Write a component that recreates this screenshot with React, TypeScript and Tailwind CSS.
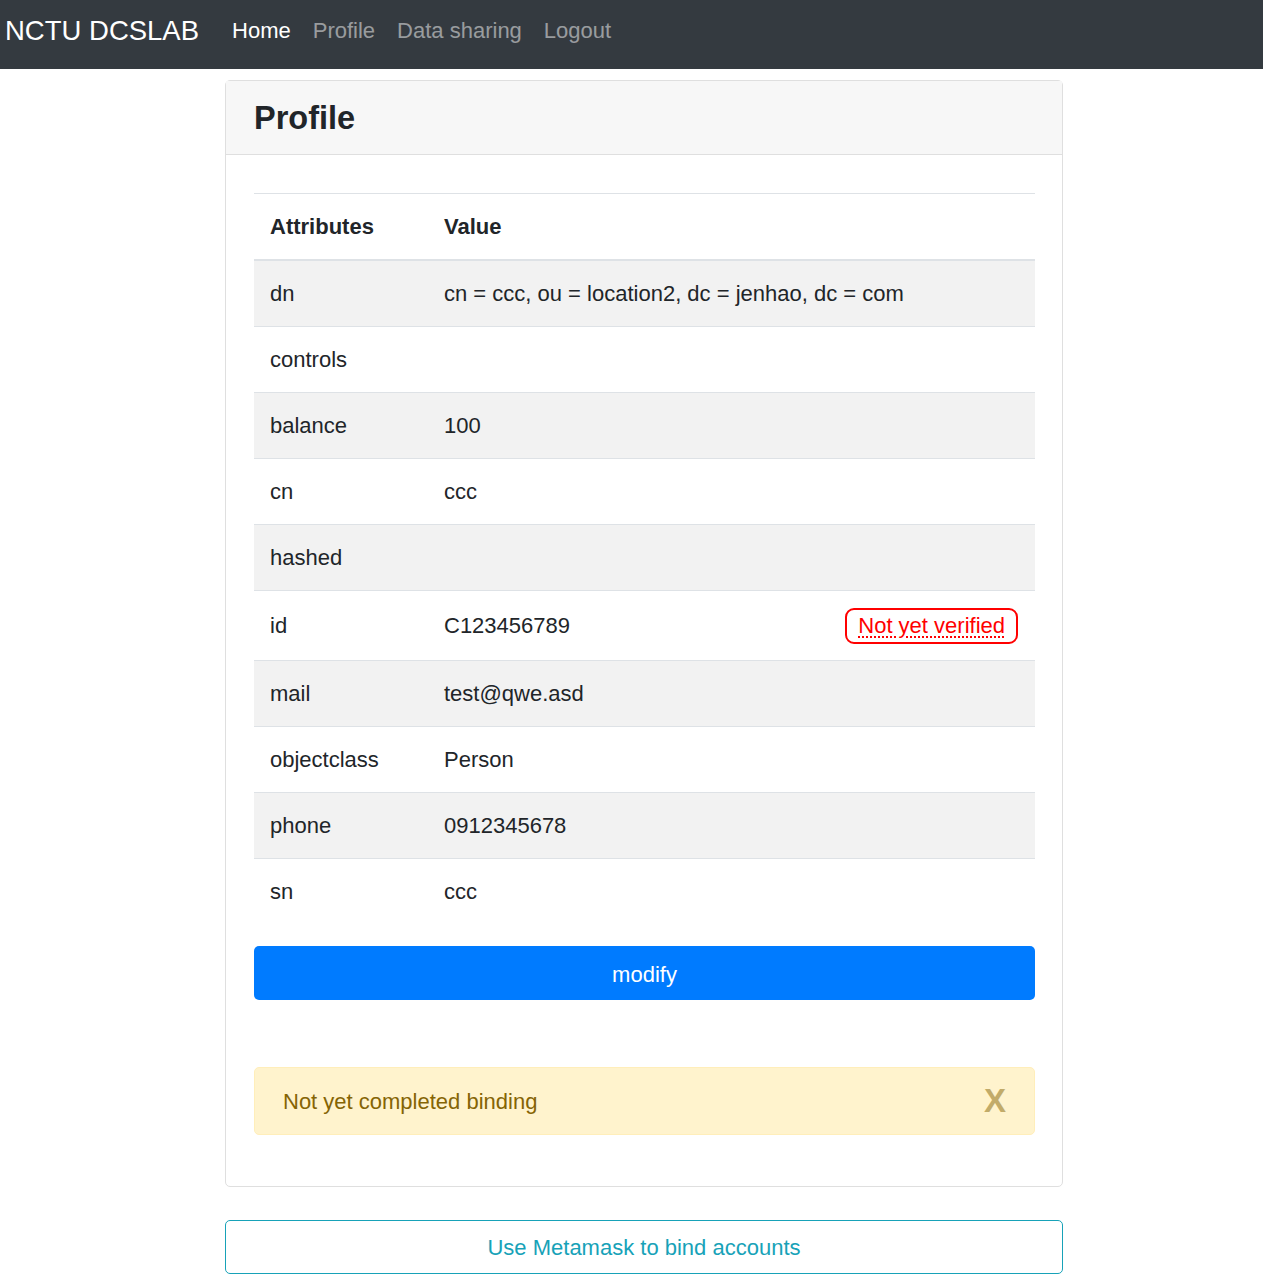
const rows: { attr: string; value: string; badge?: boolean }[] = [
  { attr: 'dn', value: 'cn = ccc, ou = location2, dc = jenhao, dc = com' },
  { attr: 'controls', value: '' },
  { attr: 'balance', value: '100' },
  { attr: 'cn', value: 'ccc' },
  { attr: 'hashed', value: '' },
  { attr: 'id', value: 'C123456789', badge: true },
  { attr: 'mail', value: 'test@qwe.asd' },
  { attr: 'objectclass', value: 'Person' },
  { attr: 'phone', value: '0912345678' },
  { attr: 'sn', value: 'ccc' },
];

const Navbar = () => (
  <nav className="flex h-[69px] items-start bg-[#343a40] pt-[14px]">
    <span className="pl-[5px] text-[27.5px] leading-[34px] text-white">NCTU DCSLAB</span>
    <ul className="ml-[33px] flex gap-[22px] text-[22px] leading-[34px]">
      <li className="text-white">Home</li>
      <li className="text-white/50">Profile</li>
      <li className="text-white/50">Data sharing</li>
      <li className="text-white/50">Logout</li>
    </ul>
  </nav>
);

export default function App() {
  return (
    <div className="min-h-[1280px] bg-white text-[#212529] [font-family:'Liberation_Sans',Arial,sans-serif]">
      <Navbar />
      <div className="ml-[225px] w-[838px] pt-[11px]">
        <div className="rounded-[5px] border border-[#dfdfdf]">
          <div className="flex h-[74px] items-center border-b border-[#dfdfdf] bg-[#f7f7f7] px-[28px]">
            <h2 className="text-[32.5px] font-bold leading-[38px]">Profile</h2>
          </div>
          <div className="pl-[28px] pr-[27px] pt-[38px] pb-[51px]">
            <table className="w-full border-collapse text-[22px] leading-[30px]">
              <thead>
                <tr className="border-t border-b-2 border-t-[#dee2e6] border-b-[#dee2e6]">
                  <th className="w-[174px] px-[16px] pt-[18px] pb-[17px] text-left font-bold">Attributes</th>
                  <th className="px-[16px] pt-[18px] pb-[17px] text-left font-bold">Value</th>
                </tr>
              </thead>
              <tbody>
                {rows.map((r, i) => (
                  <tr
                    key={r.attr}
                    className={`border-b border-[#dee2e6] ${i % 2 === 0 ? 'bg-[#f2f2f2]' : 'bg-white'} ${i === rows.length - 1 ? 'border-b-0' : ''}`}
                  >
                    <td className={`px-[16px] pt-[1px] ${r.badge ? 'h-[70px]' : 'h-[66px]'} align-middle`}>{r.attr}</td>
                    <td className="px-[16px] pt-[1px] align-middle">
                      <div className="flex items-center justify-between">
                        <span>{r.value}</span>
                        {r.badge && (
                          <span className="mr-[1px] rounded-[9px] border-2 border-[#ff0000] px-[11px] text-[22px] leading-[32px] text-[#ff0000]">
                            <abbr className="underline decoration-dotted decoration-[2px] underline-offset-[4px]">Not yet verified</abbr>
                          </span>
                        )}
                      </div>
                    </td>
                  </tr>
                ))}
              </tbody>
            </table>
            <button className="mt-[22px] h-[54px] w-full rounded-[5px] bg-[#007bff] pt-[2px] text-[22px] text-white">
              modify
            </button>
            <div className="mt-[67px] flex h-[68px] items-center justify-between rounded-[5px] border border-[#ffeeba] bg-[#fff3cd] pl-[28px] pr-[28px] text-[22px] text-[#856404]">
              <span>Not yet completed binding</span>
              <span className="text-[33px] font-bold text-[#c2ab69]">X</span>
            </div>
          </div>
        </div>
        <button className="mt-[33px] h-[54px] w-full rounded-[5px] border border-[#17a2b8] text-[22px] text-[#17a2b8]">
          Use Metamask to bind accounts
        </button>
      </div>
    </div>
  );
}
